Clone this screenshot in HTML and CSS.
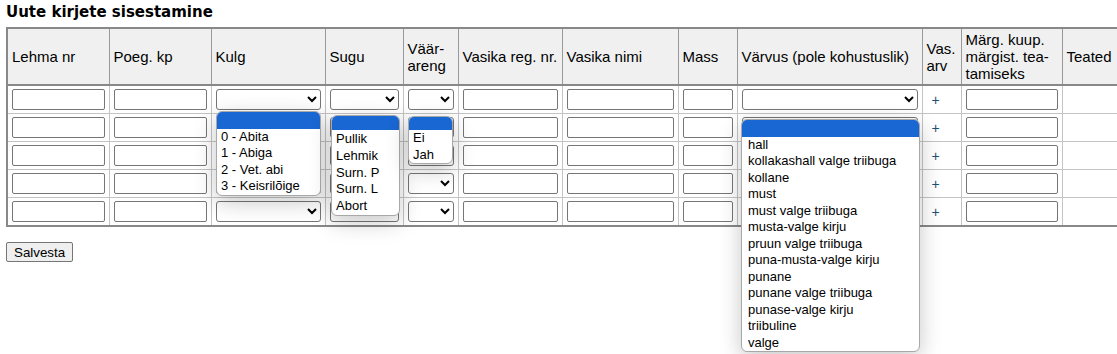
FILE: index.html
```html
<!DOCTYPE html>
<html lang="et">
<head>
  <meta charset="UTF-8">
  <meta name="viewport" content="width=device-width, initial-scale=1.0">
  <title>Uute kirjete sisestamine</title>
  <link rel="stylesheet" href="styles.css">
</head>
<body>

  <h3 class="title">Uute kirjete sisestamine</h3>

  <form class="entry-form" onsubmit="return false">
    <div class="table-wrap">
      <table class="entry-table">
        <colgroup>
          <col class="c-lehm">
          <col class="c-poeg">
          <col class="c-kulg">
          <col class="c-sugu">
          <col class="c-vaar">
          <col class="c-reg">
          <col class="c-nimi">
          <col class="c-mass">
          <col class="c-varv">
          <col class="c-arv">
          <col class="c-marg">
          <col class="c-teated">
        </colgroup>
        <thead>
          <tr>
            <th>Lehma nr</th>
            <th>Poeg. kp</th>
            <th>Kulg</th>
            <th>Sugu</th>
            <th>Väär-areng</th>
            <th>Vasika reg. nr.</th>
            <th>Vasika nimi</th>
            <th>Mass</th>
            <th>Värvus (pole kohustuslik)</th>
            <th>Vas. arv</th>
            <th>Märg. kuup. märgist. tea-tamiseks</th>
            <th>Teated</th>
          </tr>
        </thead>
        <tbody id="rows">
          <!-- read lisatakse skriptiga -->
        </tbody>
      </table>

      <!-- avatud valikute nimekirjad -->
      <div class="popup popup-kulg" id="pop-kulg"></div>
      <div class="popup popup-sugu" id="pop-sugu"></div>
      <div class="popup popup-vaar" id="pop-vaar"></div>
      <div class="popup popup-varv" id="pop-varv"></div>
    </div>

    <button class="save-btn" type="submit">Salvesta</button>
  </form>

  <script>
    const kulg = ["0 - Abita", "1 - Abiga", "2 - Vet. abi", "3 - Keisrilõige"];
    const sugu = ["Pullik", "Lehmik", "Surn. P", "Surn. L", "Abort"];
    const vaar = ["Ei", "Jah"];
    const varv = [
      "hall",
      "kollakashall valge triibuga",
      "kollane",
      "must",
      "must valge triibuga",
      "musta-valge kirju",
      "pruun valge triibuga",
      "puna-musta-valge kirju",
      "punane",
      "punane valge triibuga",
      "punase-valge kirju",
      "triibuline",
      "valge"
    ];

    function selectHtml(list) {
      let html = '<select><option value=""></option>';
      list.forEach(item => {
        html += `<option>${item}</option>`;
      });
      return html + '</select>';
    }

    const rows = document.getElementById("rows");
    for (let i = 0; i < 5; i++) {
      const tr = document.createElement("tr");
      tr.innerHTML =
        `<td><input type="text"></td>` +
        `<td><input type="text"></td>` +
        `<td>${selectHtml(kulg)}</td>` +
        `<td>${selectHtml(sugu)}</td>` +
        `<td>${selectHtml(vaar)}</td>` +
        `<td><input type="text"></td>` +
        `<td><input type="text"></td>` +
        `<td><input type="text"></td>` +
        `<td>${selectHtml(varv)}</td>` +
        `<td class="arv"><a href="#" class="add-link">+</a></td>` +
        `<td><input type="text"></td>` +
        `<td></td>`;
      rows.appendChild(tr);
    }

    // nimekirjad nagu lahti klõpsatud
    function fillPopup(id, list) {
      const pop = document.getElementById(id);
      let html = '<div class="opt opt-active"></div>';
      list.forEach(item => {
        html += `<div class="opt">${item}</div>`;
      });
      pop.innerHTML = html;
    }

    fillPopup("pop-kulg", kulg);
    fillPopup("pop-sugu", sugu);
    fillPopup("pop-vaar", vaar);
    fillPopup("pop-varv", varv);
  </script>
</body>
</html>
```

FILE: styles.css
```css
html {
  height: 100%;
}

body {
  font-family: 'Liberation Sans', Arial, sans-serif;
  font-size: 15px;
  color: #000;
  background: #fff;
  margin: 0;
  padding: 4px 6px;
  min-height: 100%;
  box-sizing: border-box;
}

.title {
  font-family: 'DejaVu Sans', Verdana, sans-serif;
  font-size: 15px;
  font-weight: bold;
  line-height: 17px;
  margin: 0 0 6px;
}

.table-wrap {
  position: relative;
  width: max-content;
}

.entry-table {
  border-collapse: collapse;
  table-layout: fixed;
  width: 1133px;
  border: 2px solid #888;
}

.c-lehm { width: 102px; }
.c-poeg { width: 102px; }
.c-kulg { width: 114px; }
.c-sugu { width: 78px; }
.c-vaar { width: 55px; }
.c-reg { width: 104px; }
.c-nimi { width: 116px; }
.c-mass { width: 59px; }
.c-varv { width: 185px; }
.c-arv { width: 39px; }
.c-marg { width: 101px; }
.c-teated { width: 78px; }

.entry-table th {
  background: #f0f0f0;
  font-weight: normal;
  text-align: left;
  vertical-align: middle;
  line-height: 17px;
  padding: 2px 4px;
  border: 1px solid #999;
  border-bottom: 2px solid #888;
  border-top: 2px solid #888;
}

.entry-table td {
  padding: 3px 4px;
  border: 1px solid #c4c4c4;
  height: 21px;
  vertical-align: middle;
}

.entry-table input,
.entry-table select {
  display: block;
  width: 100%;
  height: 21px;
  box-sizing: border-box;
  border: 1px solid #767676;
  border-radius: 2px;
  background: #fff;
  font-family: 'Liberation Sans', Arial, sans-serif;
  font-size: 13px;
  margin: 0;
}

.entry-table input {
  padding: 1px 2px;
}

.entry-table select {
  border-radius: 3px;
}

.arv {
  padding-left: 9px !important;
}

.add-link {
  color: #1b5270;
  text-decoration: none;
  font-size: 14px;
}

/* avatud rippmenüüd */
.popup {
  position: absolute;
  background: #fff;
  border: 1px solid #a8a8a8;
  border-radius: 6px;
  overflow: hidden;
  box-shadow: 0 6px 22px rgba(0, 0, 0, 0.22);
  font-size: 13px;
  line-height: 16.5px;
  z-index: 10;
}

.opt {
  height: 16.5px;
  padding: 0 4px;
  white-space: nowrap;
}

.opt-active {
  background: #1967d2;
}

.popup-kulg {
  left: 210px;
  top: 84px;
  width: 103px;
}

.popup-sugu {
  left: 325px;
  top: 88px;
  width: 67px;
}

.popup-sugu .opt {
  height: 16.8px;
  line-height: 16.8px;
}

.popup-sugu .opt-active {
  height: 14px;
  margin-bottom: 1px;
}

.popup-vaar .opt-active {
  height: 13px;
}

.popup-vaar {
  left: 402px;
  top: 89px;
  width: 43px;
}

.popup-varv {
  left: 735px;
  top: 92px;
  width: 177px;
}

.popup-varv .opt {
  padding-left: 6px;
}

.save-btn {
  margin-top: 15px;
  font-family: 'Liberation Sans', Arial, sans-serif;
  font-size: 13.33px;
  height: 20px;
  padding: 0 7px;
  background: #efefef;
  border: 1px solid #767676;
  border-radius: 2px;
  color: #000;
}
```
